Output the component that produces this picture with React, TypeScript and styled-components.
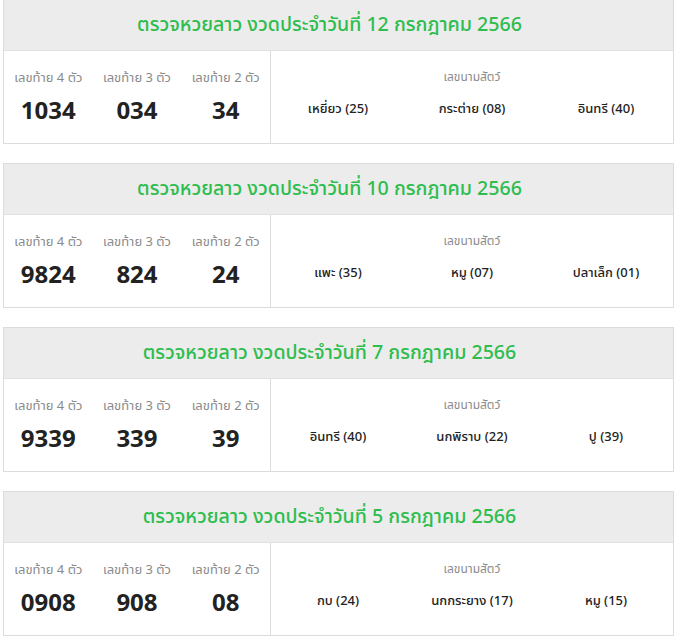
import styled, { createGlobalStyle } from "styled-components"

const GlobalStyle = createGlobalStyle`
    body {
        margin: 0;
        background: #ffffff;
        font-family: 'Noto Sans', 'Noto Sans Thai', 'Open Sans', sans-serif;
    }
`

const Page = styled.div`
    display: flex;
    flex-direction: column;
    gap: 19px;
    padding: 0 3px 0 3px;
    margin-top: -1px;
`

const Card = styled.div`
    display: flex;
    flex-direction: column;
    width: 669px;
    border: 1px solid #dcdcdc;
    background-color: #ffffff;
`

const Header = styled.div`
    display: flex;
    justify-content: center;
    align-items: center;
    height: 50px;
    background-color: #ececec;
    border-bottom: 1px solid #e2e2e2;
    padding-right: 18px;
    font-size: 19.6px;
    font-weight: 500;
    color: #2ebd4e;
`

const Body = styled.div`
    display: grid;
    grid-template-columns: 267px 1fr;
    height: 92px;
`

const LastDigits = styled.div`
    display: grid;
    grid-template-columns: repeat(3, 1fr);
    border-right: 1px solid #dcdcdc;
`

const Animals = styled.div`
    display: flex;
    flex-direction: column;
    align-items: center;
`

const AnimalRow = styled.div`
    display: grid;
    grid-template-columns: repeat(3, 1fr);
    width: 100%;
`

const Column = styled.div`
    display: flex;
    flex-direction: column;
    align-items: center;
`

const Label = styled.div<{ $size?: number }>`
    margin-top: 17px;
    font-size: ${(p) => p.$size ?? 13}px;
    color: #8a8a8a;
`

const Number = styled.div`
    margin-top: 5px;
    font-size: 24px;
    font-weight: bold;
    color: #222222;
`

const AnimalName = styled.div`
    text-align: center;
    margin-top: 13px;
    font-size: 13px;
    font-weight: 500;
    color: #222222;
`

interface Draw {
    date: string,
    four: string,
    three: string,
    two: string,
    animals: string[]
}

const draws: Draw[] = [
    { date: "12", four: "1034", three: "034", two: "34", animals: ["เหยี่ยว (25)", "กระต่าย (08)", "อินทรี (40)"] },
    { date: "10", four: "9824", three: "824", two: "24", animals: ["แพะ (35)", "หมู (07)", "ปลาเล็ก (01)"] },
    { date: "7", four: "9339", three: "339", two: "39", animals: ["อินทรี (40)", "นกพิราบ (22)", "ปู (39)"] },
    { date: "5", four: "0908", three: "908", two: "08", animals: ["กบ (24)", "นกกระยาง (17)", "หมู (15)"] },
]

function DrawCard(props: Draw) {
    return (
        <Card>
            <Header>ตรวจหวยลาว งวดประจำวันที่ {props.date} กรกฎาคม 2566</Header>
            <Body>
                <LastDigits>
                    <Column>
                        <Label>เลขท้าย 4 ตัว</Label>
                        <Number>{props.four}</Number>
                    </Column>
                    <Column>
                        <Label>เลขท้าย 3 ตัว</Label>
                        <Number>{props.three}</Number>
                    </Column>
                    <Column>
                        <Label>เลขท้าย 2 ตัว</Label>
                        <Number>{props.two}</Number>
                    </Column>
                </LastDigits>
                <Animals>
                    <Label $size={12}>เลขนามสัตว์</Label>
                    <AnimalRow>
                        {props.animals.map((a) => <AnimalName key={a}>{a}</AnimalName>)}
                    </AnimalRow>
                </Animals>
            </Body>
        </Card>
    )
}

export default function App() {
    return (
        <>
            <GlobalStyle />
            <Page>
                {draws.map((d) => <DrawCard key={d.date} {...d} />)}
            </Page>
        </>
    )
}
